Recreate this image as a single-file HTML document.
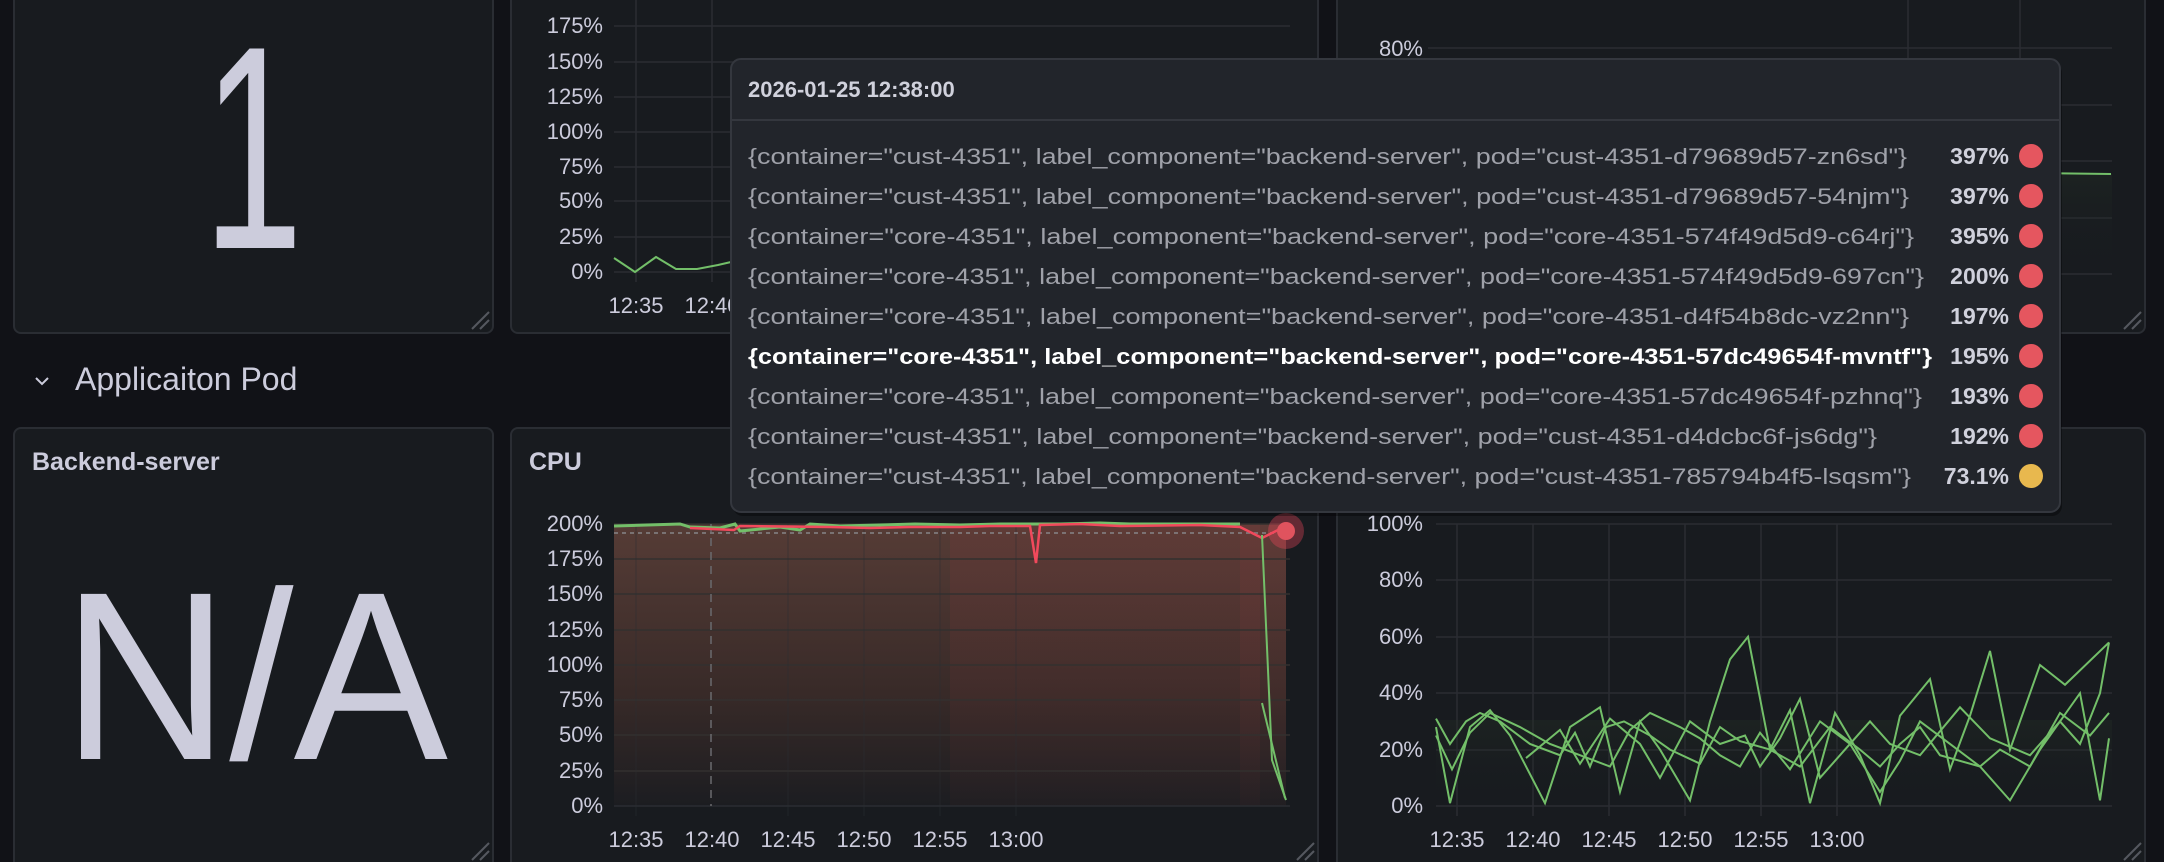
<!DOCTYPE html>
<html><head><meta charset="utf-8"><style>
html,body{margin:0;padding:0;background:#111217;width:2164px;height:862px;overflow:hidden}
svg{display:block;font-family:"Liberation Sans",sans-serif}
</style></head><body>
<svg width="2164" height="862" viewBox="0 0 2164 862" xmlns="http://www.w3.org/2000/svg">
<defs>
<linearGradient id="cpu" x1="0" y1="0" x2="0" y2="1">
<stop offset="0" stop-color="#563c36"/><stop offset="0.6" stop-color="#382a28"/><stop offset="1" stop-color="#1c1d21"/>
</linearGradient>
<linearGradient id="ov" x1="0" y1="0" x2="0" y2="1">
<stop offset="0" stop-color="#7a3a3a" stop-opacity="0.25"/><stop offset="1" stop-color="#7a3a3a" stop-opacity="0.05"/>
</linearGradient>
<linearGradient id="grn" x1="0" y1="0" x2="0" y2="1">
<stop offset="0" stop-color="#243026" stop-opacity="0.35"/><stop offset="1" stop-color="#181b1f" stop-opacity="0"/>
</linearGradient>
</defs>
<rect width="2164" height="862" fill="#111217"/>

<rect x="14" y="-12" width="479" height="345" rx="7" fill="#181b1f" stroke="#2a2d33" stroke-width="2"/>
<rect x="511" y="-12" width="807" height="345" rx="7" fill="#181b1f" stroke="#2a2d33" stroke-width="2"/>
<rect x="1337" y="-12" width="808" height="345" rx="7" fill="#181b1f" stroke="#2a2d33" stroke-width="2"/>
<g stroke="#55585f" stroke-width="2">
<line x1="472" y1="329" x2="489" y2="312"/><line x1="480" y1="329" x2="489" y2="320"/>
<line x1="1297" y1="329" x2="1314" y2="312"/><line x1="1305" y1="329" x2="1314" y2="320"/>
<line x1="2124" y1="329" x2="2141" y2="312"/><line x1="2132" y1="329" x2="2141" y2="320"/>
</g>
<text x="253" y="248" font-size="290" fill="#ccccdc" text-anchor="middle" textLength="100" lengthAdjust="spacingAndGlyphs">1</text>

<g stroke="#2a2d32" stroke-width="1.5">
<line x1="614" y1="26" x2="1290" y2="26"/><line x1="614" y1="62" x2="1290" y2="62"/><line x1="614" y1="97" x2="1290" y2="97"/><line x1="614" y1="132" x2="1290" y2="132"/><line x1="614" y1="167" x2="1290" y2="167"/><line x1="614" y1="201" x2="1290" y2="201"/><line x1="614" y1="237" x2="1290" y2="237"/><line x1="614" y1="272" x2="1290" y2="272"/>
<line x1="636" y1="0" x2="636" y2="282"/><line x1="712" y1="0" x2="712" y2="282"/>
</g>
<g fill="#ccccdc" font-size="22" text-anchor="end">
<text x="603" y="33">175%</text><text x="603" y="69">150%</text><text x="603" y="104">125%</text><text x="603" y="139">100%</text><text x="603" y="174">75%</text><text x="603" y="208">50%</text><text x="603" y="244">25%</text><text x="603" y="279">0%</text>
</g>
<text x="636" y="313" font-size="22" fill="#ccccdc" text-anchor="middle">12:35</text>
<text x="712" y="313" font-size="22" fill="#ccccdc" text-anchor="middle">12:40</text>
<polyline points="614,258 635,272 656,257 676,269 697,269 718,265 731,262" fill="none" stroke="#73bf69" stroke-width="2"/>

<g stroke="#2a2d32" stroke-width="1.5">
<line x1="1428" y1="48" x2="2112" y2="48"/><line x1="1428" y1="105" x2="2112" y2="105"/><line x1="1428" y1="161" x2="2112" y2="161"/><line x1="1428" y1="218" x2="2112" y2="218"/><line x1="1428" y1="274" x2="2112" y2="274"/>
<line x1="1908" y1="0" x2="1908" y2="284"/><line x1="2020" y1="0" x2="2020" y2="284"/>
</g>
<text x="1423" y="56" font-size="22" fill="#ccccdc" text-anchor="end">80%</text>
<rect x="2028" y="174" width="84" height="100" fill="url(#grn)"/>
<line x1="2028" y1="173" x2="2111" y2="174" stroke="#73bf69" stroke-width="2"/>

<polyline points="36,378 42,384 48,378" fill="none" stroke="#ccccdc" stroke-width="2"/>
<text x="75" y="390" font-size="32" fill="#ccccdc">Applicaiton Pod</text>

<rect x="14" y="428" width="479" height="450" rx="7" fill="#181b1f" stroke="#2a2d33" stroke-width="2"/>
<rect x="511" y="428" width="807" height="450" rx="7" fill="#181b1f" stroke="#2a2d33" stroke-width="2"/>
<rect x="1337" y="428" width="808" height="450" rx="7" fill="#181b1f" stroke="#2a2d33" stroke-width="2"/>
<g stroke="#55585f" stroke-width="2">
<line x1="472" y1="860" x2="489" y2="843"/><line x1="480" y1="860" x2="489" y2="851"/>
<line x1="1297" y1="860" x2="1314" y2="843"/><line x1="1305" y1="860" x2="1314" y2="851"/>
<line x1="2124" y1="860" x2="2141" y2="843"/><line x1="2132" y1="860" x2="2141" y2="851"/>
</g>
<text x="32" y="470" font-size="25" font-weight="bold" fill="#ccccdc">Backend-server</text>
<text x="255" y="759" font-size="240" fill="#ccccdc" text-anchor="middle" textLength="386" lengthAdjust="spacingAndGlyphs">N/A</text>
<text x="529" y="470" font-size="25" font-weight="bold" fill="#ccccdc">CPU</text>

<rect x="614" y="524" width="672" height="282" fill="url(#cpu)"/>
<rect x="950" y="524" width="310" height="282" fill="url(#ov)"/>
<rect x="1240" y="524" width="46" height="282" fill="url(#ov)"/>
<g stroke="#33302f" stroke-width="1.5">
<line x1="614" y1="524" x2="1290" y2="524"/><line x1="614" y1="559" x2="1290" y2="559"/><line x1="614" y1="594" x2="1290" y2="594"/><line x1="614" y1="630" x2="1290" y2="630"/><line x1="614" y1="665" x2="1290" y2="665"/><line x1="614" y1="700" x2="1290" y2="700"/><line x1="614" y1="735" x2="1290" y2="735"/><line x1="614" y1="771" x2="1290" y2="771"/>
</g>
<line x1="614" y1="806" x2="1290" y2="806" stroke="#2a2d32" stroke-width="1.5"/>
<g stroke="#2a2d32" stroke-width="1" opacity="0.5">
<line x1="636" y1="524" x2="636" y2="816"/><line x1="788" y1="524" x2="788" y2="816"/><line x1="864" y1="524" x2="864" y2="816"/><line x1="940" y1="524" x2="940" y2="816"/><line x1="1016" y1="524" x2="1016" y2="816"/>
</g>
<line x1="711" y1="524" x2="711" y2="806" stroke="#6a6a6e" stroke-width="1.5" stroke-dasharray="8,6"/>
<line x1="614" y1="533" x2="1286" y2="533" stroke="#8a8a8e" stroke-width="2" stroke-dasharray="4,4" opacity="0.7"/>
<polyline points="614,526 680,524 690,527 720,528 735,524 740,531 780,527 800,530 810,524 840,526 880,525 915,524 960,525 1000,524 1040,524 1060,524 1100,523 1130,524 1190,524 1240,524" fill="none" stroke="#73bf69" stroke-width="3"/>
<polyline points="690,528 734,530 740,526 830,527 870,528 910,527 960,527 990,526 1030,526 1036,563 1040,525 1080,524 1120,526 1200,525 1240,527 1262,538 1286,526" fill="none" stroke="#f2495c" stroke-width="2.5"/>
<polyline points="1262,535 1272,760 1286,800" fill="none" stroke="#73bf69" stroke-width="2"/>
<polyline points="1262,703 1285,798" fill="none" stroke="#73bf69" stroke-width="2"/>
<circle cx="1286" cy="531" r="18" fill="#f2495c" opacity="0.35"/>
<circle cx="1286" cy="531" r="9" fill="#e0535e"/>
<g fill="#ccccdc" font-size="22" text-anchor="end">
<text x="603" y="531">200%</text><text x="603" y="566">175%</text><text x="603" y="601">150%</text><text x="603" y="637">125%</text><text x="603" y="672">100%</text><text x="603" y="707">75%</text><text x="603" y="742">50%</text><text x="603" y="778">25%</text><text x="603" y="813">0%</text>
</g>
<g fill="#ccccdc" font-size="22" text-anchor="middle">
<text x="636" y="847">12:35</text><text x="712" y="847">12:40</text><text x="788" y="847">12:45</text><text x="864" y="847">12:50</text><text x="940" y="847">12:55</text><text x="1016" y="847">13:00</text>
</g>

<g stroke="#2a2d32" stroke-width="1.5">
<line x1="1436" y1="524" x2="2112" y2="524"/><line x1="1436" y1="580" x2="2112" y2="580"/><line x1="1436" y1="637" x2="2112" y2="637"/><line x1="1436" y1="693" x2="2112" y2="693"/><line x1="1436" y1="750" x2="2112" y2="750"/><line x1="1436" y1="806" x2="2112" y2="806"/>
<line x1="1457" y1="524" x2="1457" y2="816"/><line x1="1533" y1="524" x2="1533" y2="816"/><line x1="1609" y1="524" x2="1609" y2="816"/><line x1="1685" y1="524" x2="1685" y2="816"/><line x1="1761" y1="524" x2="1761" y2="816"/><line x1="1837" y1="524" x2="1837" y2="816"/>
</g>
<rect x="1436" y="720" width="676" height="86" fill="url(#grn)"/>
<g fill="#ccccdc" font-size="22" text-anchor="end">
<text x="1423" y="531">100%</text><text x="1423" y="587">80%</text><text x="1423" y="644">60%</text><text x="1423" y="700">40%</text><text x="1423" y="757">20%</text><text x="1423" y="813">0%</text>
</g>
<g fill="#ccccdc" font-size="22" text-anchor="middle">
<text x="1457" y="847">12:35</text><text x="1533" y="847">12:40</text><text x="1609" y="847">12:45</text><text x="1685" y="847">12:50</text><text x="1761" y="847">12:55</text><text x="1837" y="847">13:00</text>
</g>
<g transform="translate(0,806) scale(1,-2.82)" fill="none" stroke="#73bf69" stroke-width="2">
<polyline vector-effect="non-scaling-stroke" points="1436,31 1450,22 1466,30 1480,33 1500,30 1530,22 1560,18 1575,26 1590,14 1606,28 1624,30 1650,25 1670,20 1700,15 1720,28 1740,23 1770,20 1800,14 1830,28 1860,20 1880,14 1900,22 1920,28 1940,18 1980,14 2000,20 2030,14 2060,33 2090,25 2109,33"/>
<polyline vector-effect="non-scaling-stroke" points="1436,28 1450,1 1470,28 1490,34 1510,25 1545,1 1570,28 1600,35 1620,5 1640,30 1660,20 1690,2 1710,30 1730,52 1748,60 1770,20 1790,34 1810,1 1835,33 1860,18 1880,1 1900,32 1930,45 1950,13 1970,32 1990,55 2010,20 2040,50 2065,43 2109,58"/>
<polyline vector-effect="non-scaling-stroke" points="1436,25 1452,13 1470,26 1490,33 1520,28 1550,22 1580,18 1610,14 1630,27 1650,33 1680,28 1700,24 1720,18 1740,14 1760,26 1790,13 1820,30 1850,22 1880,5 1900,16 1920,30 1950,22 1980,14 2010,2 2040,20 2060,30 2080,22 2100,40 2109,58"/>
<polyline vector-effect="non-scaling-stroke" points="1526,17 1560,27 1580,15 1610,31 1640,22 1660,10 1690,30 1720,22 1745,25 1760,14 1780,24 1800,38 1820,10 1845,20 1870,30 1890,22 1920,18 1960,35 1990,24 2030,18 2060,30 2080,40 2100,2 2109,24"/>
</g>

<rect x="733" y="63" width="1329" height="453" rx="10" fill="#000" opacity="0.35"/>
<rect x="731" y="59" width="1329" height="453" rx="10" fill="#22252b" stroke="#34373e" stroke-width="2"/>
<line x1="732" y1="120" x2="2059" y2="120" stroke="#34373e" stroke-width="2"/>
<text x="748" y="97" font-size="22" font-weight="bold" fill="#d0d1dc">2026-01-25 12:38:00</text>
<g font-size="22" fill="#9fa1a9">
<text x="748" y="164" textLength="1159" lengthAdjust="spacingAndGlyphs">{container="cust-4351", label_component="backend-server", pod="cust-4351-d79689d57-zn6sd"}</text>
<text x="748" y="204" textLength="1161" lengthAdjust="spacingAndGlyphs">{container="cust-4351", label_component="backend-server", pod="cust-4351-d79689d57-54njm"}</text>
<text x="748" y="244" textLength="1166" lengthAdjust="spacingAndGlyphs">{container="core-4351", label_component="backend-server", pod="core-4351-574f49d5d9-c64rj"}</text>
<text x="748" y="284" textLength="1176" lengthAdjust="spacingAndGlyphs">{container="core-4351", label_component="backend-server", pod="core-4351-574f49d5d9-697cn"}</text>
<text x="748" y="324" textLength="1161" lengthAdjust="spacingAndGlyphs">{container="core-4351", label_component="backend-server", pod="core-4351-d4f54b8dc-vz2nn"}</text>
<text x="748" y="364" textLength="1184" lengthAdjust="spacingAndGlyphs" fill="#ffffff" font-weight="bold">{container="core-4351", label_component="backend-server", pod="core-4351-57dc49654f-mvntf"}</text>
<text x="748" y="404" textLength="1174" lengthAdjust="spacingAndGlyphs">{container="core-4351", label_component="backend-server", pod="core-4351-57dc49654f-pzhnq"}</text>
<text x="748" y="444" textLength="1129" lengthAdjust="spacingAndGlyphs">{container="cust-4351", label_component="backend-server", pod="cust-4351-d4dcbc6f-js6dg"}</text>
<text x="748" y="484" textLength="1163" lengthAdjust="spacingAndGlyphs">{container="cust-4351", label_component="backend-server", pod="cust-4351-785794b4f5-lsqsm"}</text>
</g>
<g font-size="23" font-weight="bold" fill="#d0d1dc" text-anchor="end">
<text x="2009" y="164">397%</text><text x="2009" y="204">397%</text><text x="2009" y="244">395%</text><text x="2009" y="284">200%</text><text x="2009" y="324">197%</text><text x="2009" y="364">195%</text><text x="2009" y="404">193%</text><text x="2009" y="444">192%</text><text x="2009" y="484">73.1%</text>
</g>
<g fill="#e5565f">
<circle cx="2031" cy="156" r="12"/><circle cx="2031" cy="196" r="12"/><circle cx="2031" cy="236" r="12"/><circle cx="2031" cy="276" r="12"/><circle cx="2031" cy="316" r="12"/><circle cx="2031" cy="356" r="12"/><circle cx="2031" cy="396" r="12"/><circle cx="2031" cy="436" r="12"/>
</g>
<circle cx="2031" cy="476" r="12" fill="#e8b84e"/>
</svg>
</body></html>
